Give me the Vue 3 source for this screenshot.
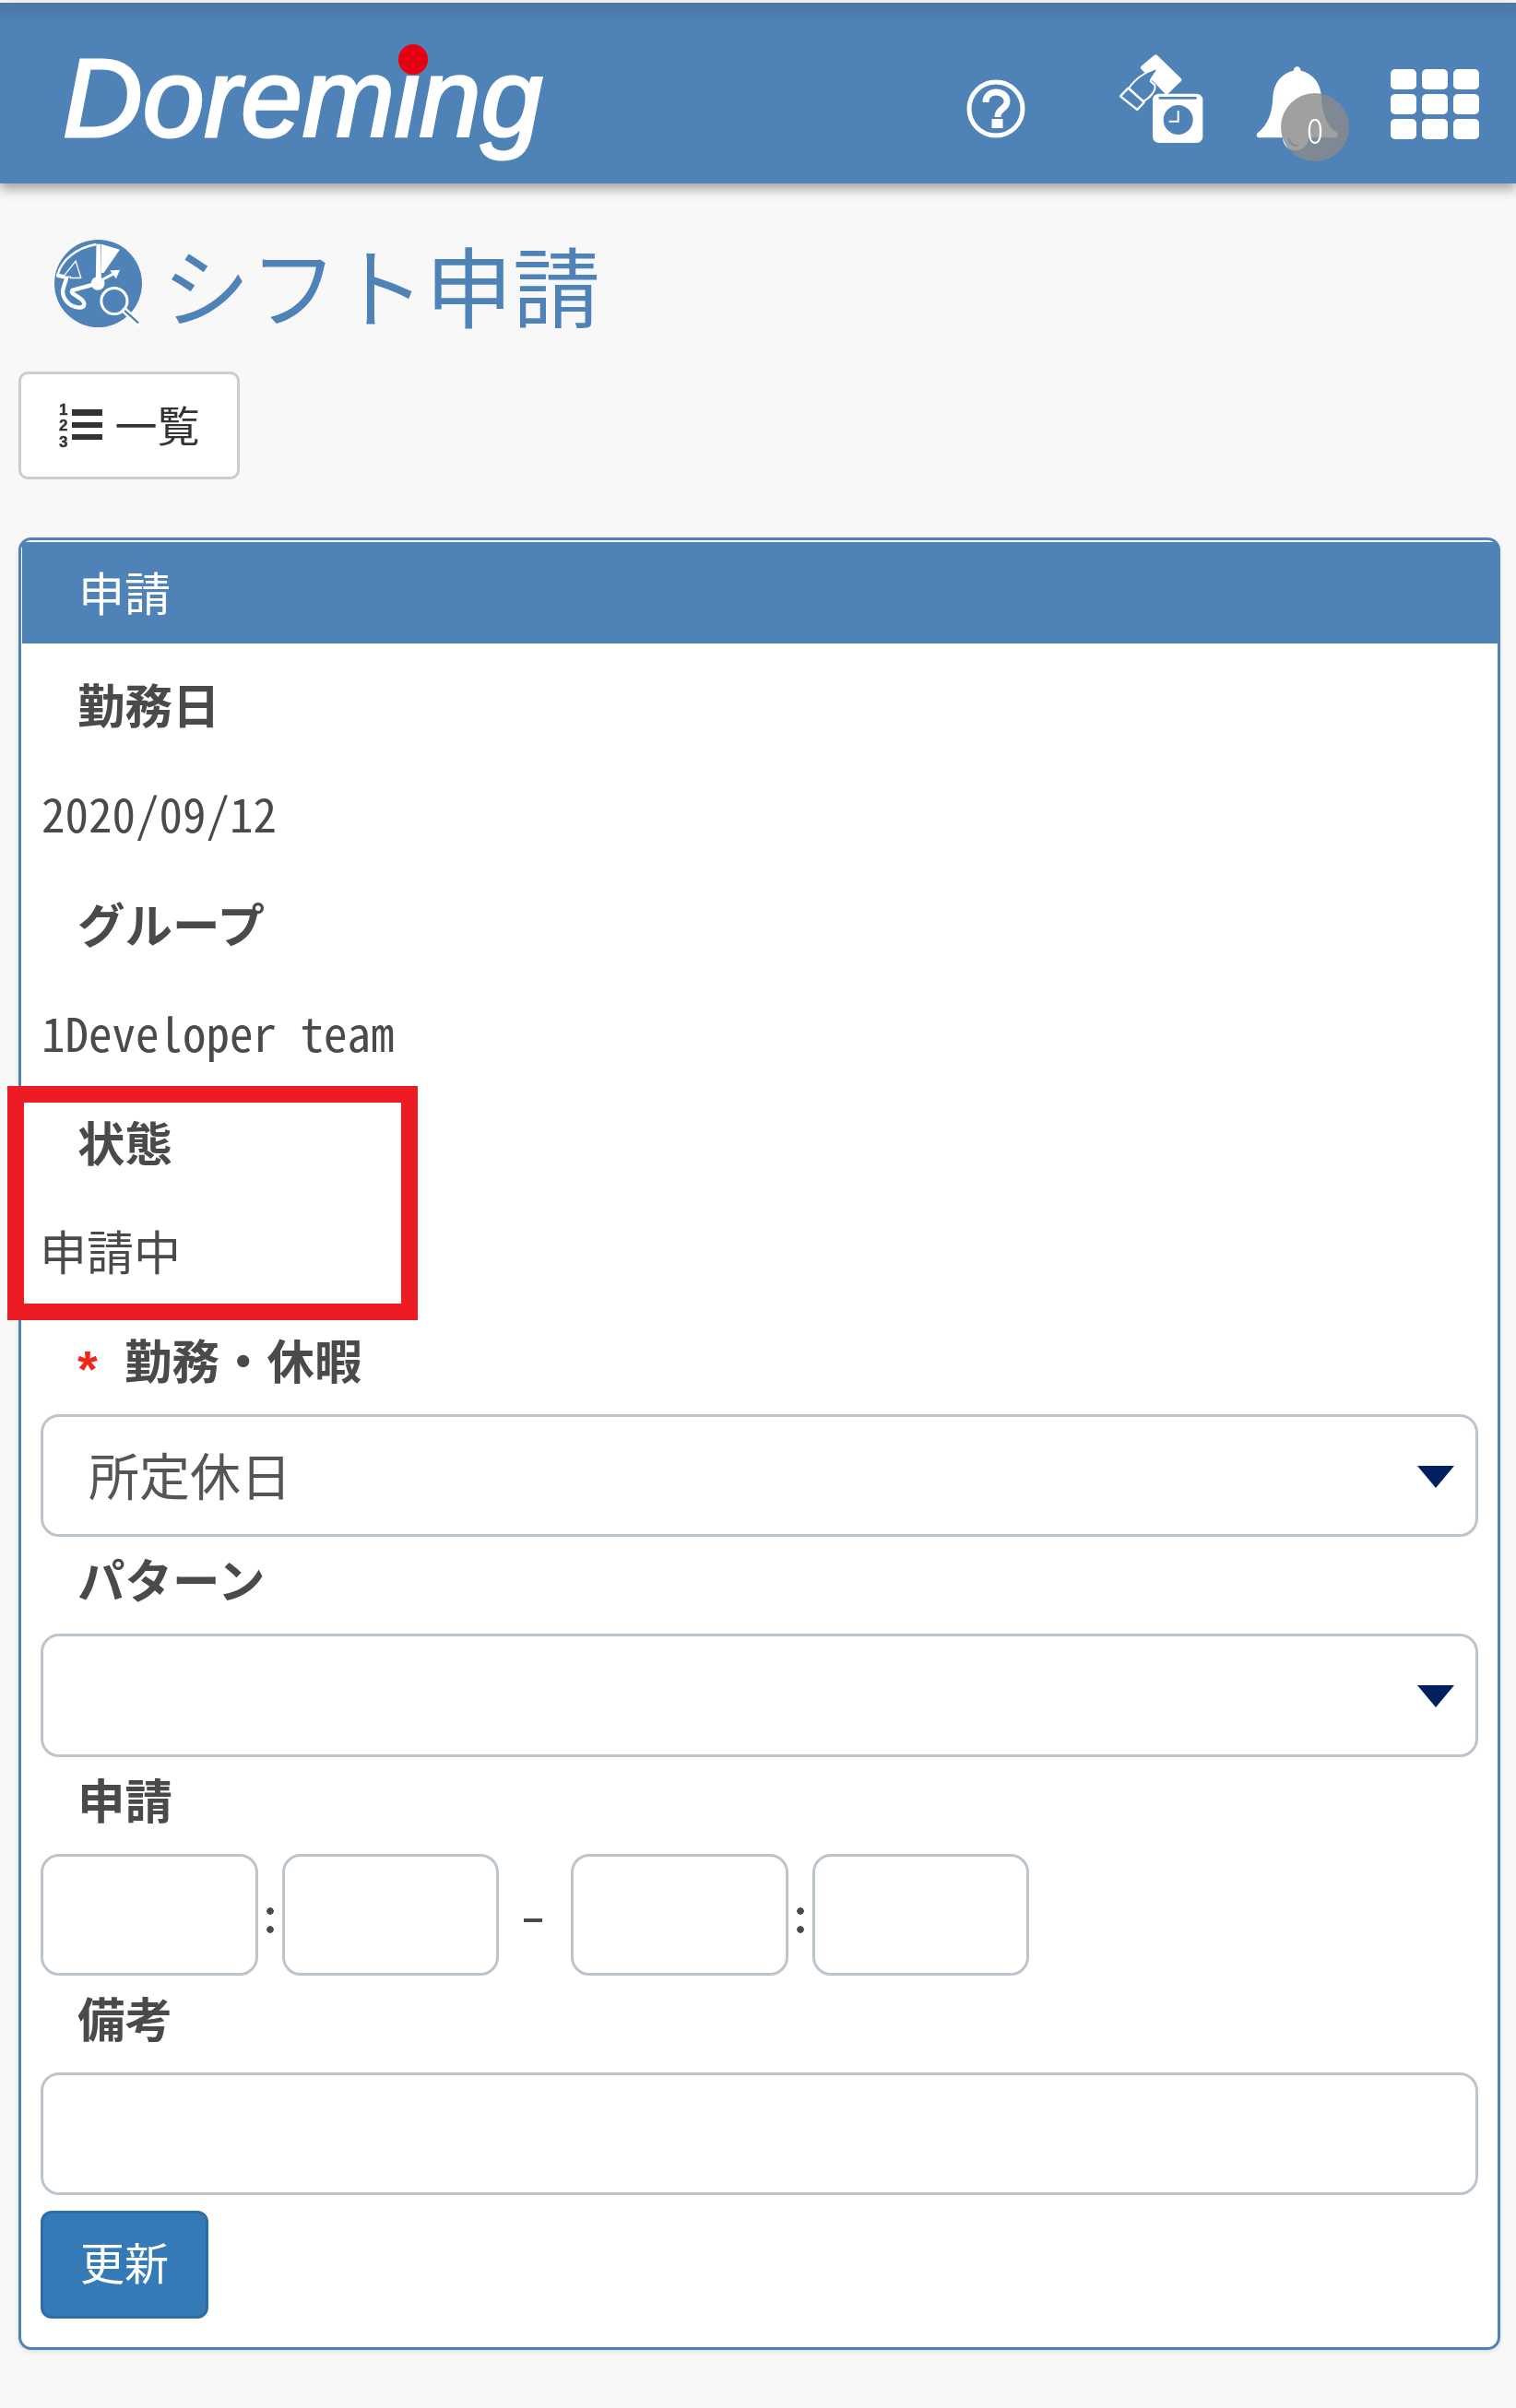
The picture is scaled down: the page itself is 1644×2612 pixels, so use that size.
<script setup>
const grid = Array.from({ length: 9 }, (_, i) => i)
</script>

<template>
  <div class="page">
    <header class="topbar">
      <div class="logo">Doreming<span class="logo-dot"></span></div>
      <div class="tools">
        <svg class="ic-help" viewBox="0 0 64 64">
          <circle cx="32" cy="32" r="29" fill="none" stroke="#fff" stroke-width="5" />
          <path d="M21 25c0-7 5-11 11-11 7 0 12 4 12 10 0 8-10 8-10 16v1" fill="none" stroke="#fff" stroke-width="7" />
          <rect x="27.500" y="43" width="12" height="10" fill="#fff" />
        </svg>
        <svg class="ic-card" viewBox="0 0 330 330">
          <path d="M145 20 222 95 180 135 103 55Z" fill="#fff" stroke="#fff" stroke-width="14" stroke-linejoin="round" />
          <path d="M58 122C75 95 110 70 152 56 147 75 130 85 128 100L140 110C150 125 130 150 105 165Z" fill="#4f83b8" stroke="#fff" stroke-width="6" stroke-linejoin="round" />
          <path d="M55 122 107 168 85 192 30 148Z" fill="#4f83b8" stroke="#fff" stroke-width="7" stroke-linejoin="round" />
          <rect x="135" y="140" width="163" height="160" rx="20" fill="#fff" />
          <rect x="155" y="150" width="123" height="8" fill="#4f83b8" />
          <circle cx="218" cy="225" r="48" fill="#4f83b8" />
          <path d="M218 195V230H188" fill="none" stroke="#fff" stroke-width="6" />
        </svg>
        <div class="bell-wrap">
          <svg class="ic-bell" viewBox="0 0 345 360">
            <path d="M143 50C143 32 167 32 167 50 205 58 232 90 234 135 236 190 250 230 285 252 290 258 285 268 278 268H32C24 268 20 258 27 252 60 225 74 190 76 135 78 90 105 58 143 50Z" fill="#fff" />
            <circle cx="150" cy="268" r="42" fill="#fff" />
            <path d="M128 270C130 288 142 296 157 294" fill="none" stroke="#4f83b8" stroke-width="5" />
          </svg>
          <span class="badge">0</span>
        </div>
        <div class="apps">
          <span v-for="i in grid" :key="i" class="app-cell"></span>
        </div>
      </div>
    </header>

    <h1 class="title">
      <svg class="ic-title" viewBox="26 26 290 290">
        <circle cx="168" cy="168" r="142" fill="#4f83b8" />
        <path d="M36 142C48 92 98 52 162 41" fill="none" stroke="#fff" stroke-width="7" />
        <path d="M178 40 238 58 186 134 178 134Z" fill="#fff" />
        <path d="M162 40H176L178 150H160Z" fill="#fff" />
        <circle cx="167" cy="168" r="22" fill="#fff" />
        <path d="M170 162 222 134" stroke="#fff" stroke-width="9" />
        <path d="M238 124 206 126 226 152Z" fill="#fff" />
        <path d="M150 172 84 190C78 200 92 204 106 214 128 228 128 246 106 246 72 244 44 210 56 180 60 166 64 158 66 148L38 142" fill="none" stroke="#fff" stroke-width="13" stroke-linejoin="round" stroke-linecap="round" />
        <path d="M95 95 112 150H78V146L55 146Z" fill="#4f83b8" stroke="#fff" stroke-width="4" stroke-linejoin="round" />
        <circle cx="220" cy="225" r="42" fill="#4f83b8" stroke="#fff" stroke-width="9" />
        <path d="M254 256 298 296" stroke="#fff" stroke-width="20" stroke-linecap="round" />
        <path d="M256 258 296 294" stroke="#4f83b8" stroke-width="7" stroke-linecap="round" />
      </svg>
      <span>シフト申請</span>
    </h1>

    <div class="actions">
      <button class="list-btn" type="button">
        <svg class="ic-list" viewBox="0 0 48 48">
          <rect x="14" y="6" width="33" height="7" fill="#333" />
          <rect x="14" y="20" width="33" height="6" fill="#333" />
          <rect x="14" y="33" width="33" height="6" fill="#333" />
          <text x="0" y="12" class="n">1</text>
          <text x="0" y="29" class="n">2</text>
          <text x="0" y="47" class="n">3</text>
        </svg>
        <span>一覧</span>
      </button>
    </div>

    <section class="panel">
      <div class="panel-head">申請</div>
      <div class="panel-body">
        <div class="label">勤務日</div>
        <div class="value">2020/09/12</div>
        <div class="label">グループ</div>
        <div class="value">1Developer team</div>
        <div class="label">状態</div>
        <div class="value last">申請中</div>

        <div class="flabel"><span class="req">*</span>勤務・休暇</div>
        <div class="select">
          <span>所定休日</span>
          <i class="caret"></i>
        </div>
        <div class="flabel">パターン</div>
        <div class="select tall">
          <i class="caret"></i>
        </div>
        <div class="flabel">申請</div>
        <div class="times">
          <div class="box"></div>
          <span class="colon"></span>
          <div class="box"></div>
          <span class="dash"></span>
          <div class="box"></div>
          <span class="colon"></span>
          <div class="box"></div>
        </div>
        <div class="flabel">備考</div>
        <div class="note"></div>
        <button class="submit" type="button">更新</button>
      </div>
      <div class="marker"></div>
    </section>
  </div>
</template>

<style>
html, body { margin: 0; background: #f8f8f8; }
</style>

<style scoped>
.page {
  width: 1644px;
  height: 2612px;
  background: #f8f8f8;
  overflow: hidden;
  font-family: "Noto Sans CJK JP", "Liberation Sans", sans-serif;
  color: #4a4a4a;
  box-sizing: border-box;
  padding-top: 3px;
  filter: blur(.5px);
}
.topbar {
  height: 196px;
  background: linear-gradient(#4a76a5 0, #4f83b8 24px);
  box-shadow: 0 6px 12px rgba(0, 0, 0, .35);
  display: flex;
  align-items: flex-start;
  justify-content: space-between;
  box-sizing: border-box;
  padding-left: 68px;
  padding-right: 40px;
}
.logo {
  position: relative;
  font: italic 400 120px/138px "Liberation Sans", sans-serif;
  color: #fff;
  margin-top: 34px;
  -webkit-text-stroke: 3px #fff;
}
.logo-dot {
  position: absolute;
  left: 364px;
  top: 11px;
  width: 32px;
  height: 33px;
  border-radius: 50%;
  background: #e60012;
}
.tools {
  display: flex;
  align-items: flex-start;
}
.ic-help { width: 64px; height: 64px; margin-top: 83px; }
.ic-card { width: 110px; height: 110px; margin-top: 52px; margin-left: 93px; }
.bell-wrap { position: relative; width: 115px; height: 120px; margin-top: 57px; margin-left: 40px; }
.ic-bell { width: 115px; height: 120px; display: block; }
.badge {
  position: absolute;
  left: 34px;
  top: 41px;
  width: 74px;
  height: 74px;
  border-radius: 50%;
  background: rgba(138, 138, 138, .81);
  color: #fff;
  font-size: 38px;
  font-weight: 300;
  font-feature-settings: "hwid";
  line-height: 78px;
  text-align: center;
}
.apps {
  width: 96px;
  height: 76px;
  margin-top: 72px;
  margin-left: 38px;
  display: grid;
  grid-template-columns: repeat(3, 28px);
  grid-template-rows: repeat(3, 22px);
  gap: 5px 6px;
}
.app-cell { background: #fff; border-radius: 5px; }
.title {
  margin: 0;
  box-sizing: border-box;
  padding: 51px 0 0 59px;
  height: 167px;
  display: flex;
  align-items: center;
  font-size: 95px;
  font-weight: 400;
  line-height: 116px;
  color: #4f83b8;
}
.ic-title { width: 97px; height: 97px; margin-right: 20px; }
.actions { padding: 37px 0 0 20px; }
.list-btn {
  width: 240px;
  height: 117px;
  background: #fff;
  border: 3px solid #ccc;
  border-radius: 10px;
  display: flex;
  align-items: center;
  justify-content: center;
  gap: 13px;
  padding: 0 0 5px;
  font-family: inherit;
  font-size: 46px;
  color: #333;
}
.ic-list { width: 48px; height: 48px; margin-top: 5px; overflow: visible; }
.n { font: 700 17px "Liberation Sans", sans-serif; fill: #333; stroke: #333; stroke-width: .4px; }
.panel {
  position: relative;
  margin: 63px 0 0 20px;
  width: 1607px;
  height: 1966px;
  box-sizing: border-box;
  background: #fff;
  border: 3px solid #4f83b8;
  border-radius: 14px;
  box-shadow: 0 2px 5px rgba(0, 0, 0, .1);
}
.panel-head {
  margin: 2px 0 0 1px;
  height: 110px;
  background: #4f83b8;
  color: #fff;
  font-size: 50px;
  line-height: 106px;
  padding-left: 61px;
}
.panel-body { padding: 6px 21px 0; }
.label {
  height: 118px;
  line-height: 118px;
  padding-left: 40px;
  font-size: 51.500px;
  font-weight: 700;
}
.value {
  height: 119.500px;
  line-height: 119.500px;
  padding-left: 1px;
  font-size: 51px;
  font-feature-settings: "hwid";
  white-space: pre;
}
.value.last { height: 132px; line-height: 119.500px; text-indent: -2px; }
.flabel {
  height: 94px;
  line-height: 90px;
  margin-bottom: 11px;
  padding-left: 40px;
  font-size: 51.500px;
  font-weight: 700;
  white-space: pre;
}
.req {
  display: inline-block;
  width: 51px;
  color: #f0261c;
  font-family: "Liberation Sans", sans-serif;
  font-size: 56px;
  font-weight: 700;
  line-height: 40px;
  vertical-align: -8px;
}
.select {
  position: relative;
  width: 1559px;
  height: 133px;
  box-sizing: border-box;
  border: 3px solid #bdc5cc;
  border-radius: 20px;
  background: #fff;
  padding-left: 49px;
  font-size: 55px;
  line-height: 122px;
  color: #555;
}
.select.tall { height: 134px; }
.caret {
  position: absolute;
  right: 23px;
  top: 53px;
  width: 0;
  height: 0;
  border-left: 20px solid transparent;
  border-right: 20px solid transparent;
  border-top: 24px solid #002060;
}
.times { display: flex; align-items: center; height: 132px; }
.box {
  width: 235.500px;
  height: 132px;
  box-sizing: border-box;
  border: 3px solid #bdc5cc;
  border-radius: 20px;
  background: #fff;
}
.colon {
  position: relative;
  width: 26px;
  height: 28px;
  margin-top: 12px;
  background:
    radial-gradient(circle at 13px 4px, #4a4a4a 3.500px, transparent 4px),
    radial-gradient(circle at 13px 24px, #4a4a4a 3.500px, transparent 4px);
}
.dash { width: 78px; height: 4px; margin-top: 12px; background: linear-gradient(90deg, transparent 27px, #4a4a4a 27px, #4a4a4a 47px, transparent 47px); }
.note {
  width: 1559px;
  height: 133px;
  box-sizing: border-box;
  border: 3px solid #bdc5cc;
  border-radius: 20px;
  background: #fff;
}
.submit {
  display: block;
  margin-top: 17px;
  width: 182px;
  height: 117px;
  background: #337ab7;
  border: 3px solid #2e6da4;
  border-radius: 12px;
  color: #fff;
  font-family: inherit;
  font-size: 48px;
  padding: 0 0 10px;
}
.marker {
  position: absolute;
  left: -15px;
  top: 592px;
  width: 445px;
  height: 254px;
  box-sizing: border-box;
  border: 18px solid #ed1c24;
  pointer-events: none;
}
</style>
